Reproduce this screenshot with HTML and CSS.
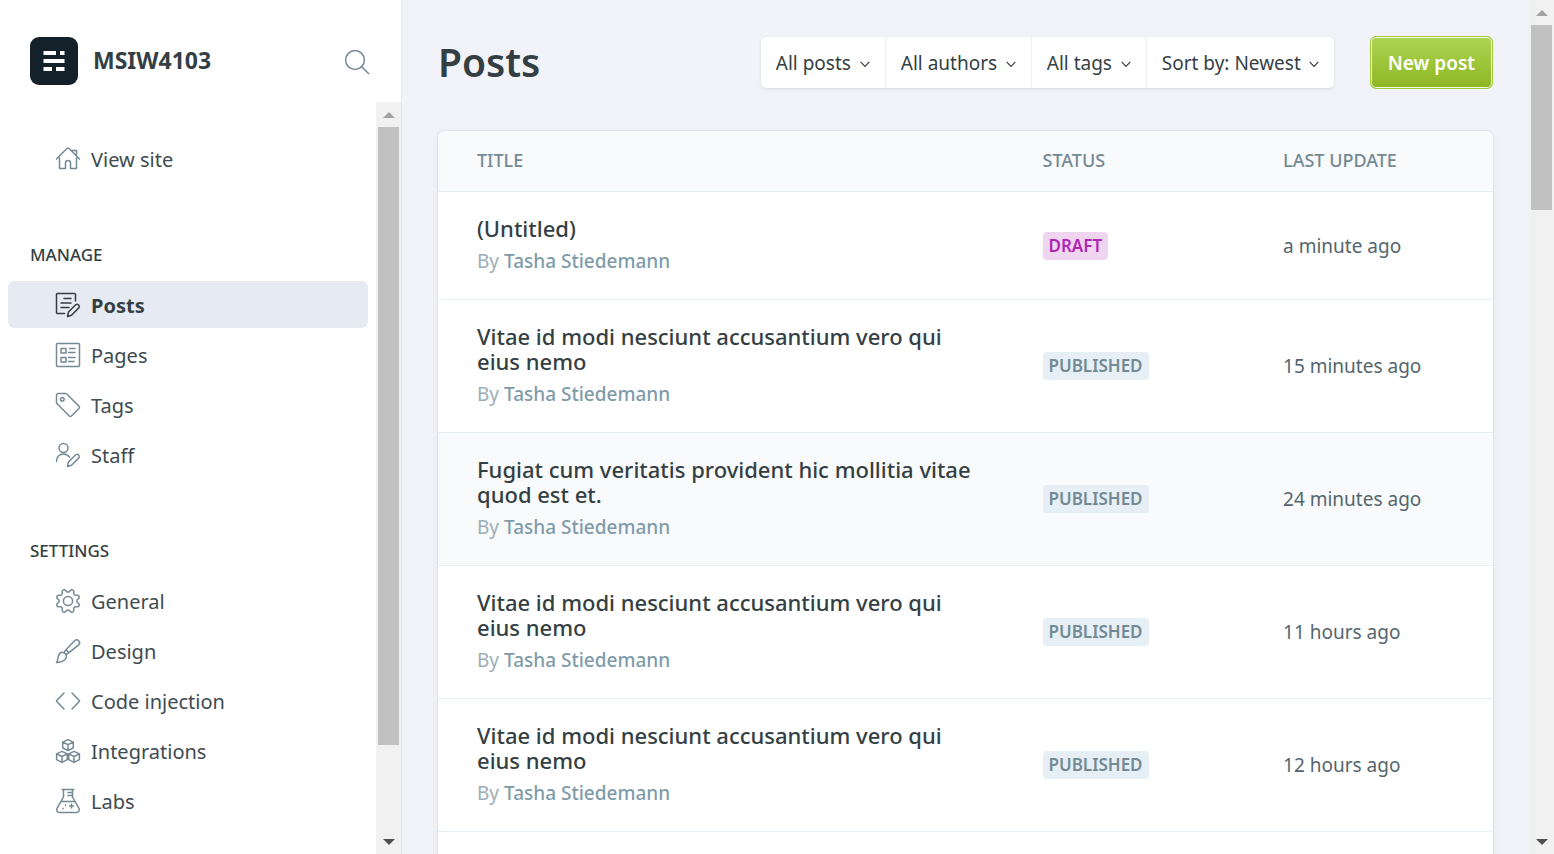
FILE: index.html
```html
<!DOCTYPE html>
<html lang="en">
<head>
<meta charset="utf-8">
<meta name="viewport" content="width=device-width, initial-scale=1">
<title>Posts - MSIW4103</title>
<link rel="stylesheet" href="styles.css">
</head>
<body>
<div class="app">
  <aside class="sidebar">
    <header class="brand">
      <svg class="brand-logo" viewBox="0 0 48 48" aria-hidden="true"><rect width="48" height="48" rx="9" fill="#15212a"/><path fill="#fff" d="M13.500 14h12.500v4H13.500zM30 14h4.500v4H30zM13.500 22h21v4h-21zM13.500 30h8.500v4h-8.500zM26 30h8.500v4H26z"/></svg>
      <span class="brand-name">MSIW4103</span>
      <button class="search" type="button" aria-label="Search"><svg class="icon" viewBox="0 0 24 24"><circle cx="10" cy="10" r="9.400"/><path d="M16.700 16.700l6.800 6.800"/></svg></button>
    </header>
    <div class="nav-area">
      <nav class="nav">
        <ul class="nav-list">
          <li><a class="nav-link" href="#"><svg class="icon" viewBox="0 0 24 24"><path d="M.5 12L11.200 1.300a1.100 1.100 0 0 1 1.600 0L23.500 12M3.500 11v10.500h6V16a2.500 2.500 0 0 1 5 0v5.500h6V11M15.500 3.500h5v5"/></svg>View site</a></li>
        </ul>
        <h2 class="nav-heading">Manage</h2>
        <ul class="nav-list">
          <li><a class="nav-link active" href="#" aria-current="page"><svg class="icon" viewBox="0 0 24 24"><path d="M8.500 20.500h-7a1 1 0 0 1-1-1v-18a1 1 0 0 1 1-1h17a1 1 0 0 1 1 1V8M8 5.500h7M5 10h10M5 14.500h8M11.500 23.500l1-4.500 7.200-7.200a2.200 2.200 0 0 1 3.100 3.100L15.500 22.300z"/></svg>Posts</a></li>
          <li><a class="nav-link" href="#"><svg class="icon" viewBox="0 0 24 24"><rect x=".5" y=".5" width="23" height="23" rx="1"/><path d="M5 5.500h5v4.500H5zM5 14.500h5V19H5zM13.500 5.500H19M12.500 9.500H19M12.500 14.500H19M12.500 18.500H18"/></svg>Pages</a></li>
          <li><a class="nav-link" href="#"><svg class="icon" viewBox="0 0 24 24"><path d="M2 .5h7.400a2 2 0 0 1 1.400.6l12.200 12.200a1.500 1.500 0 0 1 0 2.100L15.400 23a1.500 1.500 0 0 1-2.100 0L1.100 10.800a2 2 0 0 1-.6-1.400V2A1.500 1.500 0 0 1 2 .5z"/><circle cx="6.300" cy="6.300" r="1.800"/></svg>Tags</a></li>
          <li><a class="nav-link" href="#"><svg class="icon" viewBox="0 0 24 24"><circle cx="7.500" cy="5" r="4.500"/><path d="M.5 18.500c0-4.500 3-7.500 7-7.500 2.600 0 4.700 1.200 6 3.200M11.500 23.500l1-4.500 7.200-7.200a2.200 2.200 0 0 1 3.100 3.100L15.500 22.300z"/></svg>Staff</a></li>
        </ul>
        <h2 class="nav-heading">Settings</h2>
        <ul class="nav-list">
          <li><a class="nav-link" href="#"><svg class="icon" viewBox="0 0 24 24"><circle cx="12" cy="12" r="4.600"/><path d="M10.546 2.438a1.957 1.957 0 0 0 2.908 0L14.400 1.400a1.959 1.959 0 0 1 3.410 1.413l-.071 1.400a1.958 1.958 0 0 0 2.051 2.054l1.400-.071a1.959 1.959 0 0 1 1.410 3.410l-1.042.940a1.960 1.960 0 0 0 0 2.909l1.042.940a1.959 1.959 0 0 1-1.413 3.410l-1.400-.071a1.958 1.958 0 0 0-2.056 2.056l.071 1.400A1.959 1.959 0 0 1 14.400 22.600l-.941-1.041a1.959 1.959 0 0 0-2.908 0L9.606 22.600A1.959 1.959 0 0 1 6.200 21.192l.072-1.400a1.958 1.958 0 0 0-2.056-2.056l-1.400.071A1.958 1.958 0 0 1 1.400 14.400l1.041-.940a1.960 1.960 0 0 0 0-2.909L1.400 9.606A1.958 1.958 0 0 1 2.809 6.200l1.400.071a1.958 1.958 0 0 0 2.058-2.060L6.200 2.810A1.959 1.959 0 0 1 9.606 1.400z"/></svg>General</a></li>
          <li><a class="nav-link" href="#"><svg class="icon" viewBox="0 0 24 24"><path d="M.5 23.500c1.800-1 .5-6.500 3.300-9.100a3.700 3.700 0 0 1 5.400.3 3.700 3.700 0 0 1 .2 5.300C7 22.600 3.500 23.500.5 23.500zM8 13.500l2-2.800 2.900 2.900-3 2.100M10 10.700l8.600-9a2.900 2.900 0 0 1 4.100 4.100l-9.800 7.800"/></svg>Design</a></li>
          <li><a class="nav-link" href="#"><svg class="icon" viewBox="0 0 24 24"><path d="M8 4L.7 11.500a.7.700 0 0 0 0 1L8 20M16 4l7.300 7.500a.7.700 0 0 1 0 1L16 20"/></svg>Code injection</a></li>
          <li><a class="nav-link" href="#"><svg class="icon" viewBox="0 0 24 24"><path d="M12 .6l5.300 2.500v5.800L12 11.500 6.700 8.900V3.100zM6.700 3.100L12 5.700l5.300-2.600M12 5.700v5.800M6 12.400l5.300 2.500v5.800L6 23.400.6 20.700v-5.800zM.6 14.900L6 17.500l5.300-2.600M6 17.500v5.900M18 12.400l5.400 2.500v5.800L18 23.400l-5.300-2.700v-5.800zM12.700 14.900l5.300 2.600 5.400-2.600M18 17.500v5.900"/></svg>Integrations</a></li>
          <li><a class="nav-link" href="#"><svg class="icon" viewBox="0 0 24 24"><path d="M6 .5h12M7.500.5V8L1 19.300A2.800 2.800 0 0 0 3.500 23.500h17a2.800 2.800 0 0 0 2.500-4.200L16.500 8V.5M4.800 12.500h14.400M12 3.500h4.500M12 6.500h4.500M15.500 15v4M13.500 17h4M7 19.200v.6M9.500 15.700v.6"/></svg>Labs</a></li>
        </ul>
      </nav>
      <div class="scrollbar" aria-hidden="true"><span class="arrow arrow-up"></span><span class="track"><span class="thumb thumb-nav"></span></span><span class="arrow arrow-down"></span></div>
    </div>
  </aside>

  <main class="main">
    <header class="toolbar">
      <h1 class="page-title">Posts</h1>
      <div class="filters">
        <label class="filter"><select aria-label="Post type"><option>All posts</option></select><svg class="chevron" viewBox="0 0 11 7"><path d="M.7.7l4.800 5 4.800-5"/></svg></label>
        <label class="filter"><select aria-label="Author"><option>All authors</option></select><svg class="chevron" viewBox="0 0 11 7"><path d="M.7.7l4.800 5 4.800-5"/></svg></label>
        <label class="filter"><select aria-label="Tag"><option>All tags</option></select><svg class="chevron" viewBox="0 0 11 7"><path d="M.7.7l4.800 5 4.800-5"/></svg></label>
        <label class="filter"><select aria-label="Sort order"><option>Sort by: Newest</option></select><svg class="chevron" viewBox="0 0 11 7"><path d="M.7.7l4.800 5 4.800-5"/></svg></label>
      </div>
      <button class="new-post" type="button">New post</button>
    </header>

    <table class="posts">
      <colgroup><col class="col-title"><col class="col-status"><col class="col-date"></colgroup>
      <thead><tr><th>Title</th><th>Status</th><th>Last update</th></tr></thead>
      <tbody>
        <tr><td><h3 class="post-title">(Untitled)</h3><p class="byline">By <b>Tasha Stiedemann</b></p></td><td><span class="badge draft">Draft</span></td><td class="date">a minute ago</td></tr>
        <tr><td><h3 class="post-title">Vitae id modi nesciunt accusantium vero qui eius nemo</h3><p class="byline">By <b>Tasha Stiedemann</b></p></td><td><span class="badge">Published</span></td><td class="date">15 minutes ago</td></tr>
        <tr class="highlight"><td><h3 class="post-title">Fugiat cum veritatis provident hic mollitia vitae quod est et.</h3><p class="byline">By <b>Tasha Stiedemann</b></p></td><td><span class="badge">Published</span></td><td class="date">24 minutes ago</td></tr>
        <tr><td><h3 class="post-title">Vitae id modi nesciunt accusantium vero qui eius nemo</h3><p class="byline">By <b>Tasha Stiedemann</b></p></td><td><span class="badge">Published</span></td><td class="date">11 hours ago</td></tr>
        <tr><td><h3 class="post-title">Vitae id modi nesciunt accusantium vero qui eius nemo</h3><p class="byline">By <b>Tasha Stiedemann</b></p></td><td><span class="badge">Published</span></td><td class="date">12 hours ago</td></tr>
        <tr class="spacer"><td colspan="3"></td></tr>
      </tbody>
    </table>
  </main>
  <div class="scrollbar" aria-hidden="true"><span class="arrow arrow-up"></span><span class="track"><span class="thumb thumb-page"></span></span><span class="arrow arrow-down"></span></div>
</div>
</body>
</html>
```
FILE: styles.css
```css
* { box-sizing: border-box; }

body {
  margin: 0;
  background: #f2f3f8;
  color: #343f44;
  font-family: "Noto Sans", "Open Sans", sans-serif;
  font-size: 19px;
}

h1, h2, h3, p, ul { margin: 0; padding: 0; }
ul { list-style: none; }
button, select { font: inherit; color: inherit; }

.app { display: flex; height: 100vh; overflow: hidden; }

/* Sidebar */
.sidebar {
  display: flex;
  flex-direction: column;
  flex: 0 0 402px;
  border-right: 1px solid #e3e7ef;
  background: #fff;
}
.brand {
  display: flex;
  align-items: center;
  gap: 15px;
  height: 102px;
  padding: 37px 32px 17px 30px;
}
.brand-logo { width: 48px; height: 48px; }
.brand-name { flex: 1; font-size: 23px; font-weight: 700; line-height: 26px; padding-bottom: 2px; }
.search { display: flex; padding: 2px 0 0; border: 0; background: none; }
.icon {
  flex: none;
  width: 24px;
  height: 24px;
  fill: none;
  stroke: #738a94;
  stroke-width: 1.5;
  stroke-linecap: round;
  stroke-linejoin: round;
  overflow: visible;
}
.nav-area { display: flex; flex: 1; min-height: 0; }
.nav { flex: 1; padding: 33px 8px 0; overflow: hidden; }
.nav-heading {
  margin: 58px 22px 11px;
  font-size: 17px;
  font-weight: 500;
  line-height: 30px;
  text-transform: uppercase;
}
.nav-list { display: flex; flex-direction: column; gap: 3px; }
.nav-link {
  display: flex;
  align-items: center;
  gap: 11px;
  height: 47px;
  padding: 1px 0 0 48px;
  border-radius: 6px;
  color: #3e4b50;
  font-size: 20px;
  text-decoration: none;
}
.nav-link.active { background: #e6eaf3; color: #343f44; font-weight: 700; }
.nav-link.active .icon { stroke: #343f44; }

/* Scrollbars */
.scrollbar {
  display: flex;
  flex-direction: column;
  flex: 0 0 25px;
  background: #f1f1f1;
}
.arrow { display: flex; align-items: center; justify-content: center; height: 25px; }
.arrow::before { content: ""; border: 6px solid transparent; }
.arrow-up::before { border-top: 0; border-bottom-color: #a3a3a3; }
.arrow-down::before { border-bottom: 0; border-top-color: #505050; }
.track { flex: 1; padding: 0 2px; }
.thumb { display: block; background: #c1c1c1; }
.thumb-nav { height: 88%; }
.thumb-page { height: 23%; }

/* Main column */
.main { flex: 1; min-width: 0; padding: 36px 36px 0; overflow: hidden; }
.toolbar { display: flex; align-items: center; margin-bottom: 42px; }
.page-title { flex: 1; font-size: 39px; font-weight: 600; line-height: 52px; padding-bottom: 1px; }
.filters {
  display: flex;
  height: 51px;
  margin-right: 36px;
  border-radius: 5px;
  background: #fff;
  box-shadow: 0 1px 3px rgba(50, 60, 100, .14);
}
.filter { display: flex; align-items: center; gap: 8px; padding: 0 15px; }
.filter + .filter { border-left: 1px solid #edeff5; }
.filter select { padding: 0; border: 0; background: none; appearance: none; }
.chevron { width: 10px; height: 10px; padding-top: 3px; fill: none; stroke: #343f44; stroke-width: 1.3; }
.new-post {
  height: 53px;
  padding: 0 17px;
  border: 1px solid #a1c93a;
  border-radius: 6px;
  background: linear-gradient(#aed553, #8db624);
  box-shadow: inset 0 0 0 1px #f4f9e4;
  color: #fff;
  font-weight: 600;
}

/* Posts table */
.posts {
  width: 100%;
  table-layout: fixed;
  border-collapse: separate;
  border-spacing: 0;
  border-radius: 7px;
  background: #fff;
  box-shadow: 0 0 2px rgba(50, 60, 100, .2), 0 2px 8px rgba(50, 60, 100, .06);
}
.col-title { width: 57.3%; }
.col-status { width: 22.8%; }
.posts th, .posts td { padding: 0; border-bottom: 1px solid #e5eff5; text-align: left; }
.posts th {
  height: 61px;
  padding-bottom: 2px;
  background: #f9fafc;
  color: #738a94;
  font-size: 18px;
  font-weight: 500;
  text-transform: uppercase;
}
.posts th:first-child { border-top-left-radius: 7px; padding-left: 39px; }
.posts th:last-child { border-top-right-radius: 7px; }
.posts td { padding: 24px 0; vertical-align: middle; }
.posts td:first-child { padding-left: 39px; padding-right: 62px; }
.highlight { background: #f9fafc; }
.post-title { font-size: 22px; font-weight: 500; line-height: 25px; }
.byline { margin-top: 7px; color: #9baeb8; line-height: 27px; }
.byline b { color: #809ba8; font-weight: 500; }
.badge {
  display: inline-block;
  padding: 0 6px;
  border-radius: 4px;
  background: #e5eff5;
  color: #738a94;
  font-size: 17px;
  font-weight: 600;
  line-height: 28px;
  text-transform: uppercase;
}
.draft { background: #efd5ef; color: #ad26b4; }
.date { color: #54666d; }
```
